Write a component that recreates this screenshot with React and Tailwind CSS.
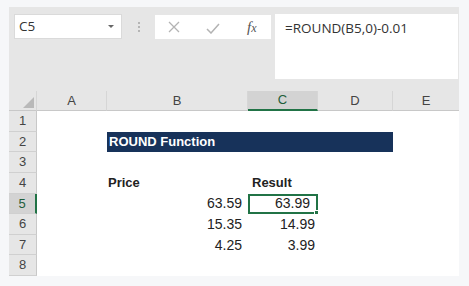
import React from 'react';

const cell = "font-['Liberation_Sans',Arial,sans-serif] text-[14px] text-[#222]";

export default function App() {
    const cols = ['A', 'B', 'C', 'D', 'E'];
    const rows = [1, 2, 3, 4, 5, 6, 7, 8];

    return (
        <div className="w-[469px] h-[286px] bg-[#f6f7f9] pt-[7px] pl-[9px]">
            <div className="w-[450px] h-[269px] bg-[#e6e6e6] flex flex-col">

                {/* Formula bar */}
                <div className="flex items-start pt-[7px] pl-[5px] h-[72px] font-['Open_Sans',sans-serif]">
                    <div className="w-[108px] h-[25px] bg-white border border-[#dadada] flex items-center justify-between pl-[4px] pr-[7px] text-[13.5px] text-[#333]">
                        <span>C5</span>
                        <span className="w-0 h-0 border-l-[3px] border-r-[3px] border-t-[3px] border-l-transparent border-r-transparent border-t-[#666]" />
                    </div>
                    <div className="w-[33px] h-[25px] flex flex-col items-center justify-center gap-[2px]">
                        <span className="w-[2px] h-[2px] bg-[#b5b5b5]" />
                        <span className="w-[2px] h-[2px] bg-[#b5b5b5]" />
                        <span className="w-[2px] h-[2px] bg-[#b5b5b5]" />
                    </div>
                    <div className="w-[116px] h-[24px] mt-[1px] bg-white flex items-center">
                        <svg width="12" height="12" viewBox="0 0 12 12" className="ml-[13px]">
                            <path d="M1 1 L11 11 M11 1 L1 11" stroke="#b3b3b3" strokeWidth="1.3" fill="none" />
                        </svg>
                        <svg width="14" height="11" viewBox="0 0 14 11" className="ml-[26px] mt-[2px]">
                            <path d="M1 6 L5 10 L13 1" stroke="#b3b3b3" strokeWidth="1.5" fill="none" />
                        </svg>
                        <span className="ml-[27px] font-['Liberation_Serif',serif] italic text-[15px] text-[#555] leading-none">
                            f<span className="text-[12px]">x</span>
                        </span>
                    </div>
                    <div className="w-[183px] h-[65px] ml-[4px] bg-white pl-[10px] pt-[4px] text-[13.5px] text-[#333]">
                        =ROUND(B5,0)-0.01
                    </div>
                </div>

                {/* Sheet */}
                <div className="mt-[12px] grid grid-cols-[28px_70px_141px_70px_75px_66px] grid-rows-[20px_repeat(8,20.625px)]">
                    {/* column headers */}
                    <div className="relative border-b border-[#c8c8c8] border-r border-r-[#d6d6d6]">
                        <span className="absolute right-[2px] bottom-[2px] w-0 h-0"
                            style={{ borderBottom: '11px solid #b9b9b9', borderLeft: '11px solid transparent' }} />
                    </div>
                    {cols.map(c => (
                        <div
                            key={c}
                            className={`flex items-center justify-center font-['Liberation_Sans',Arial,sans-serif] text-[13px] ${c === 'C' ? 'bg-[#d3d3d3] border-b-2 border-[#217346] text-[#1e5e3a]' : 'border-b border-[#c8c8c8] text-[#444]'} ${c === 'E' ? '' : 'border-r border-r-[#d6d6d6]'}`}
                        >
                            {c}
                        </div>
                    ))}

                    {rows.map(r => (
                        <React.Fragment key={r}>
                            <div className={`flex items-center justify-center font-['Liberation_Sans',Arial,sans-serif] text-[13px] border-b border-[#d0d0d0] ${r === 5 ? 'bg-[#d3d3d3] border-r-2 border-r-[#217346] text-[#1e5e3a]' : 'border-r border-r-[#c8c8c8] text-[#444]'}`}>
                                {r}
                            </div>
                            {r === 2 ? (
                                <>
                                    <div className="bg-white" />
                                    <div className="col-span-3 bg-white">
                                        <div className="h-full bg-[#17325a] flex items-center pl-[2px] font-['Liberation_Sans',Arial,sans-serif] font-bold text-[13px] text-white">
                                            ROUND Function
                                        </div>
                                    </div>
                                    <div className="bg-white" />
                                </>
                            ) : (
                                <>
                                    <div className="bg-white" />
                                    <div className={`bg-white flex items-center ${r === 4 ? 'justify-start pl-[1px]' : 'justify-end pr-[6px]'} ${cell}`}>
                                        {r === 4 && <span className="font-bold text-[13px]">Price</span>}
                                        {r === 5 && '63.59'}
                                        {r === 6 && '15.35'}
                                        {r === 7 && '4.25'}
                                    </div>
                                    <div className={`bg-white relative flex items-center ${r === 4 ? 'justify-start pl-[4px]' : 'justify-end pr-[3px]'} ${cell}`}>
                                        {r === 4 && <span className="font-bold text-[13px]">Result</span>}
                                        {r === 5 && (
                                            <div className="absolute inset-0 border-2 border-[#217346] flex items-center justify-end pr-[6px]">
                                                63.99
                                                <span className="absolute -right-[3px] -bottom-[3px] w-[5px] h-[5px] bg-[#217346] border border-white" />
                                            </div>
                                        )}
                                        {r === 6 && '14.99'}
                                        {r === 7 && '3.99'}
                                    </div>
                                    <div className="bg-white" />
                                    <div className="bg-white" />
                                </>
                            )}
                        </React.Fragment>
                    ))}
                </div>
            </div>
        </div>
    );
}
